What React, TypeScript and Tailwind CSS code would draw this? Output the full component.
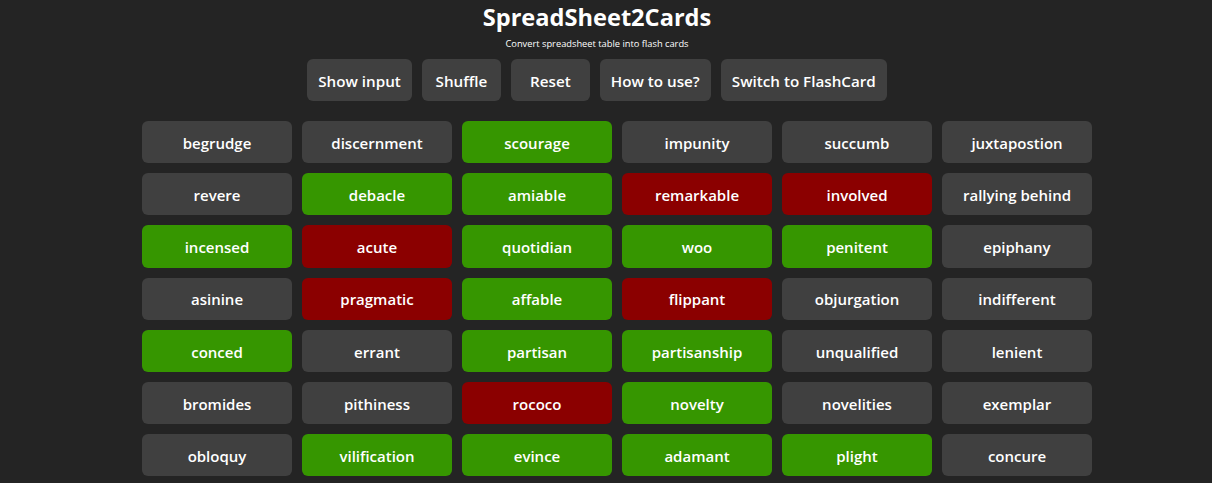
type Status = "none" | "good" | "bad";

const G: Status = "good";
const R: Status = "bad";
const N: Status = "none";

const cards: [string, Status][] = [
  ["begrudge", N], ["discernment", N], ["scourage", G], ["impunity", N], ["succumb", N], ["juxtapostion", N],
  ["revere", N], ["debacle", G], ["amiable", G], ["remarkable", R], ["involved", R], ["rallying behind", N],
  ["incensed", G], ["acute", R], ["quotidian", G], ["woo", G], ["penitent", G], ["epiphany", N],
  ["asinine", N], ["pragmatic", R], ["affable", G], ["flippant", R], ["objurgation", N], ["indifferent", N],
  ["conced", G], ["errant", N], ["partisan", G], ["partisanship", G], ["unqualified", N], ["lenient", N],
  ["bromides", N], ["pithiness", N], ["rococo", R], ["novelty", G], ["novelities", N], ["exemplar", N],
  ["obloquy", N], ["vilification", G], ["evince", G], ["adamant", G], ["plight", G], ["concure", N],
];

const statusClass: Record<Status, string> = {
  none: "bg-[#404040]",
  good: "bg-[#369600]",
  bad: "bg-[#8b0000]",
};

const buttons = ["Show input", "Shuffle", "Reset", "How to use?", "Switch to FlashCard"];

export default function App() {
  return (
    <div
      className="min-h-[483px] bg-[#242424] text-white"
      style={{ fontFamily: '"Open Sans", "Noto Sans", sans-serif' }}
    >
      {/* Header */}
      <div className="w-[1194px] flex flex-col items-center">
        <h1 className="text-[23.6px] leading-[34px] font-bold">SpreadSheet2Cards</h1>
        <p className="text-[9.3px] leading-[14px] mt-[3px]">Convert spreadsheet table into flash cards</p>
        <div className="flex gap-[10px] mt-[8px]">
          {buttons.map((b) => (
            <button
              key={b}
              className="h-[42px] min-w-[79px] px-[11px] pt-[2px] rounded-[6px] bg-[#404040] text-[15.2px] font-semibold text-white"
            >
              {b}
            </button>
          ))}
        </div>
      </div>

      {/* Cards */}
      <div className="ml-[142px] mt-[20px] w-[950px] grid grid-cols-6 gap-x-[10px] gap-y-[10px]">
        {cards.map(([word, s]) => (
          <div
            key={word}
            className={`h-[42.2px] pt-[2px] rounded-[6px] flex items-center justify-center text-[15px] font-semibold ${statusClass[s]}`}
          >
            {word}
          </div>
        ))}
      </div>
    </div>
  );
}
